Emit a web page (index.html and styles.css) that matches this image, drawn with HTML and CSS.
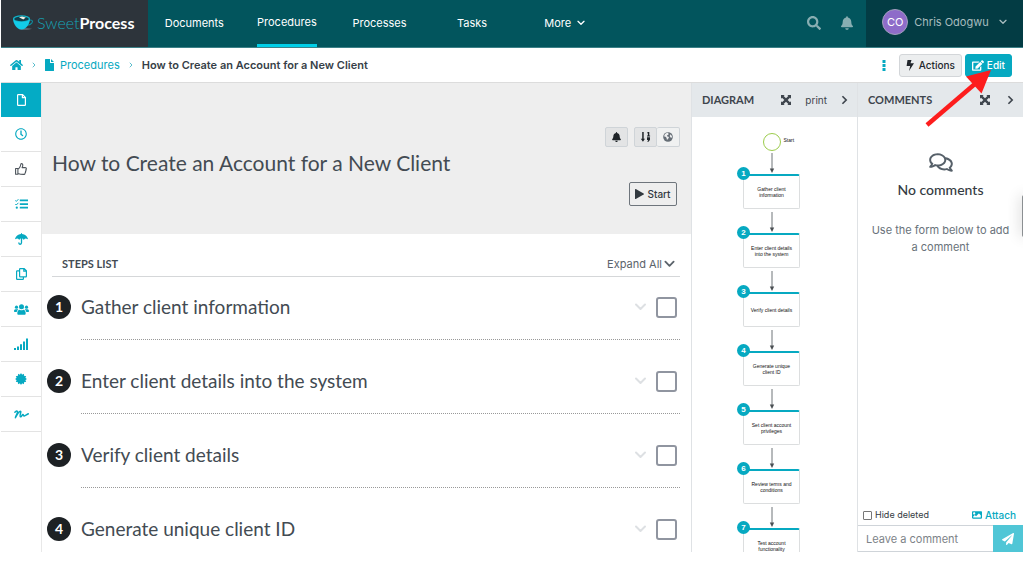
FILE: index.html
```html
<!DOCTYPE html>
<html lang="en">
<head>
<meta charset="utf-8">
<title>How to Create an Account for a New Client - SweetProcess</title>
<link rel="stylesheet" href="styles.css">
</head>
<body>
<svg class="defs" aria-hidden="true">
  <symbol id="i-down" viewBox="0 0 12 8"><path d="M1.500 1.500 6 6l4.500-4.500" fill="none" stroke="currentColor" stroke-width="2" stroke-linecap="round" stroke-linejoin="round"/></symbol>
  <symbol id="i-right" viewBox="0 0 8 12"><path d="M1.500 1.500 6 6l-4.500 4.500" fill="none" stroke="currentColor" stroke-width="2"/></symbol>
  <symbol id="i-bell" viewBox="0 0 448 512"><path d="M224 512c35.320 0 63.970-28.650 63.970-64H160.030c0 35.350 28.650 64 63.970 64zm215.390-149.710c-19.320-20.760-55.470-51.990-55.470-154.290 0-77.700-54.480-139.900-127.940-155.160V32c0-17.670-14.320-32-31.980-32s-31.980 14.330-31.980 32v20.840C118.560 68.100 64.080 130.300 64.080 208c0 102.300-36.150 133.530-55.470 154.290-6 6.450-8.660 14.160-8.610 21.710.110 16.400 12.980 32 32.100 32h383.800c19.120 0 32-15.600 32.100-32 .050-7.550-2.610-15.270-8.610-21.710z"/></symbol>
  <symbol id="i-expand" viewBox="0 0 12 12"><path d="M0 0h4.400L3.200 1.200 6 4l2.800-2.800L7.600 0H12v4.400l-1.200-1.200L8 6l2.800 2.800L12 7.600V12H7.600l1.200-1.200L6 8l-2.800 2.800L4.400 12H0V7.600l1.200 1.200L4 6 1.200 3.200 0 4.400z"/></symbol>
  <symbol id="i-arrow" viewBox="0 0 6 20"><path d="M3 0v16" stroke="#6f7478" stroke-width="1"/><path d="M.8 15.500h4.400L3 20z" fill="#4a4f53"/></symbol>
</svg>

<div class="app">
  <header class="topbar">
    <a class="logo" href="#" aria-label="SweetProcess">
      <svg width="21" height="16" viewBox="0 0 21 16">
        <path d="M15.500 5.500c3-1.500 5 .5 3.300 2.600-1 1.200-2.600 2-4.500 2.200" fill="none" stroke="#0d8ea0" stroke-width="1.100"/>
        <path d="M5 13.700c3-1 11-1 14 0-3 1.500-11 1.800-14 0z" fill="#59606a"/>
        <path d="M0 3.500C0 8 3.500 14.600 8.500 14.600S17 8 17 3.500z" fill="#12cbe8"/>
        <ellipse cx="8.500" cy="3.600" rx="8.500" ry="3.300" fill="#11b3c9"/>
        <ellipse cx="8.500" cy="3.900" rx="7.200" ry="2.400" fill="#123f4b"/>
        <path d="M6 2.300l3-.9 3.800 1-2.500 2z" fill="#f3efe2"/>
      </svg>
      <span class="logo-text">Sweet<b>Process</b></span>
    </a>
    <nav class="mainnav">
      <a href="#">Documents</a>
      <a href="#" class="active"><span>Procedures</span></a>
      <a href="#">Processes</a>
      <a href="#">Tasks</a>
      <a href="#">More <svg width="8" height="6"><use href="#i-down"/></svg></a>
    </nav>
    <div class="tools">
      <button aria-label="Search"><svg width="14" height="14" viewBox="0 0 512 512"><path d="M505 442.700L405.300 343c-4.500-4.500-10.600-7-17-7H372c27.600-35.300 44-79.700 44-128C416 93.100 322.900 0 208 0S0 93.100 0 208s93.100 208 208 208c48.300 0 92.700-16.400 128-44v16.300c0 6.400 2.500 12.500 7 17l99.700 99.700c9.400 9.400 24.600 9.400 33.900 0l28.300-28.300c9.400-9.400 9.400-24.600.1-34zM208 336c-70.700 0-128-57.200-128-128 0-70.700 57.200-128 128-128 70.700 0 128 57.200 128 128 0 70.700-57.200 128-128 128z"/></svg></button>
      <button aria-label="Notifications"><svg width="12" height="14"><use href="#i-bell"/></svg></button>
    </div>
    <button class="user"><span class="avatar">CO</span><span>Chris Odogwu</span><svg width="8" height="6"><use href="#i-down"/></svg></button>
  </header>

  <div class="crumbbar">
    <nav class="crumbs" aria-label="Breadcrumb">
      <a href="#" aria-label="Home"><svg width="13" height="12" viewBox="0 0 576 512"><path d="M280.370 148.260L96 300.110V464a16 16 0 0 0 16 16l112.060-.290a16 16 0 0 0 15.920-16V368a16 16 0 0 1 16-16h64a16 16 0 0 1 16 16v95.640a16 16 0 0 0 16 16.050L464 480a16 16 0 0 0 16-16V300L295.670 148.260a12.190 12.190 0 0 0-15.300 0zM571.600 251.470L488 182.560V44.050a12 12 0 0 0-12-12h-56a12 12 0 0 0-12 12v72.610L318.470 43a48 48 0 0 0-61 0L4.340 251.470a12 12 0 0 0-1.600 16.900l25.500 31A12 12 0 0 0 45.150 301l235.220-193.740a12.190 12.190 0 0 1 15.300 0L530.900 301a12 12 0 0 0 16.900-1.600l25.500-31a12 12 0 0 0-1.700-16.930z"/></svg></a>
      <svg class="sep" width="4" height="6"><use href="#i-right"/></svg>
      <a href="#"><svg width="9" height="12" viewBox="0 0 9 12"><path d="M.6 0H5v3.400c0 .3.300.6.600.6H9v7.400c0 .3-.3.600-.6.600H.6c-.3 0-.6-.3-.6-.6V.6C0 .3.300 0 .6 0zM6 0l3 3H6z"/></svg>Procedures</a>
      <svg class="sep" width="4" height="6"><use href="#i-right"/></svg>
      <strong>How to Create an Account for a New Client</strong>
    </nav>
    <div class="crumb-actions">
      <button class="dots" aria-label="More options"><svg width="4" height="11" viewBox="0 0 4 11"><path d="M.5 0h3v3h-3zM.5 4h3v3h-3zM.5 8h3v3h-3z"/></svg></button>
      <button class="btn"><svg width="8" height="11" viewBox="0 0 8 11"><path d="M1.500 0h4L4.500 3.300H8L3 11l1.200-5H.6z"/></svg>Actions</button>
      <button class="btn primary"><svg width="12" height="11" viewBox="0 0 576 512"><path d="M402.600 83.200l90.200 90.200c3.800 3.800 3.800 10 0 13.800L274.400 405.600l-92.800 10.300c-12.400 1.400-22.900-9.100-21.500-21.500l10.300-92.800L388.800 83.200c3.800-3.800 10-3.800 13.800 0zm162-22.900l-48.800-48.800c-15.200-15.200-39.900-15.200-55.200 0l-35.400 35.400c-3.800 3.800-3.800 10 0 13.800l90.200 90.200c3.800 3.800 10 3.800 13.800 0l35.400-35.400c15.200-15.300 15.200-40 0-55.200zM384 346.200V448H64V128h229.800c3.200 0 6.200-1.300 8.500-3.500l40-40c7.600-7.600 2.200-20.500-8.500-20.500H48C21.500 64 0 85.500 0 112v352c0 26.500 21.500 48 48 48h352c26.500 0 48-21.500 48-48V306.200c0-10.700-12.900-16-20.500-8.500l-40 40c-2.200 2.300-3.500 5.300-3.500 8.500z"/></svg>Edit</button>
    </div>
  </div>

  <div class="body">
    <nav class="rail" aria-label="Procedure sections">
      <a href="#" class="on" aria-label="Document"><svg width="9" height="12" viewBox="0 0 9 12"><path d="M1.300.6H5.600L8.400 3.400v7.300c0 .4-.3.700-.7.700H1.300c-.4 0-.7-.3-.7-.7V1.300c0-.4.300-.7.700-.7zM5.400.6v3h3" fill="none" stroke="currentColor" stroke-width="1.200"/></svg></a>
      <a href="#" aria-label="History"><svg width="12" height="12" viewBox="0 0 512 512"><path d="M256 8C119 8 8 119 8 256s111 248 248 248 248-111 248-248S393 8 256 8zm0 448c-110.500 0-200-89.500-200-200S145.500 56 256 56s200 89.500 200 200-89.500 200-200 200zm61.800-104.400l-84.900-61.700c-3.100-2.300-4.900-5.900-4.900-9.700V116c0-6.600 5.400-12 12-12h32c6.600 0 12 5.400 12 12v141.700l66.800 48.600c5.400 3.900 6.500 11.400 2.600 16.800L334.600 349c-3.900 5.300-11.400 6.500-16.800 2.600z"/></svg></a>
      <a href="#" class="muted" aria-label="Approvals"><svg width="12" height="12" viewBox="0 0 12 12"><path d="M.6 5.500h2.300v5.700H.6zM2.900 6.200c1.500-.8 2.200-2 2.500-3.300.2-1.100.3-2.300 1-2.300 1.200 0 1.500 1 1.300 2.200-.1.700-.5 1.300-.6 1.800h3c.8 0 1.300.6 1.200 1.300 0 .5-.3.800-.5 1 .3.500.2 1.200-.3 1.600.2.500 0 1.100-.4 1.400.1 1-.5 1.500-1.500 1.500-2.700 0-3.700-.2-5.700-.9" fill="none" stroke="currentColor" stroke-width="1.100" stroke-linejoin="round"/></svg></a>
      <a href="#" aria-label="Tasks"><svg width="13" height="10" viewBox="0 0 13 10"><path d="M4.800.6H13v1.700H4.800zM4.800 4.200H13v1.700H4.800zM4.800 7.800H13v1.700H4.800z"/><path d="M.3 1.400l1 1L3.400.2M.3 5l1 1 2.100-2.200" fill="none" stroke="currentColor" stroke-width="1"/><circle cx="1.800" cy="8.700" r="1.100"/></svg></a>
      <a href="#" aria-label="Policies"><svg width="13" height="12" viewBox="0 0 13 12"><path d="M6 1V.6c0-.8 1-.8 1 0V1c3 .2 5.300 2.200 5.900 4.800.1.400-.3.600-.6.300-1.100-.9-2.400-.7-3.200.5-.2.300-.4.300-.6 0C7.800 5.600 6.900 5.200 6.500 5.200s-1.300.4-2 1.400c-.2.300-.4.300-.6 0C3.100 5.400 1.800 5.200.7 6.100c-.3.300-.7.100-.6-.3C.7 3.200 3 1.200 6 1z"/><path d="M6.500 5v4.800c0 1.900-2.600 1.900-2.600.2" fill="none" stroke="currentColor" stroke-width="1.300" stroke-linecap="round"/></svg></a>
      <a href="#" aria-label="Copies"><svg width="11" height="12" viewBox="0 0 11 12"><path d="M4.200.6h4l2.200 2.200v5.400c0 .4-.2.600-.6.600H4.200c-.4 0-.6-.2-.6-.6V1.200c0-.4.200-.6.600-.6zM7.800.6v2.600h2.600M3.400 2.900H1.200c-.4 0-.6.200-.6.600v7.300c0 .4.200.6.600.6h5.600c.4 0 .6-.2.600-.6V9" fill="none" stroke="currentColor" stroke-width="1.200"/></svg></a>
      <a href="#" aria-label="Teams"><svg width="15" height="11" viewBox="0 0 15 11"><circle cx="7.500" cy="2.700" r="2.500"/><circle cx="2.500" cy="3.200" r="1.600"/><circle cx="12.500" cy="3.200" r="1.600"/><path d="M3.300 9.200c0-2 1-3.400 2.400-3.400 1.200.7 2.400.7 3.600 0 1.400 0 2.400 1.400 2.400 3.400 0 1-.5 1.500-1.200 1.500h-6c-.7 0-1.200-.5-1.200-1.500zM0 7.200C0 6 .6 5.200 1.600 5.200h1.600c.4 0 .8.100 1.100.4C3.400 6.200 2.900 7 2.700 8H.7C.2 8 0 7.700 0 7.200zM15 7.200c0-1.200-.6-2-1.600-2h-1.600c-.4 0-.8.1-1.100.4.9.6 1.400 1.400 1.600 2.400h2c.5 0 .7-.3.700-.8z"/></svg></a>
      <a href="#" aria-label="Reports"><svg width="14" height="12" viewBox="0 0 14 12"><path d="M0 10h2v2H0zM3 8.500h2V12H3zM6 6.200h2V12H6zM9 3.500h2V12H9zM12 .5h2V12h-2z"/></svg></a>
      <a href="#" aria-label="Certification"><svg width="12" height="12" viewBox="-6 -6 12 12"><circle r="4.600"/><path id="ray" d="M-1.200-4 0-6l1.200 2zM-1.200 4 0 6l1.200-2zM-4-1.200-6 0l2 1.200zM4-1.200 6 0 4 1.200z"/><use href="#ray" transform="rotate(30)"/><use href="#ray" transform="rotate(60)"/></svg></a>
      <a href="#" aria-label="Signatures"><svg width="15" height="9" viewBox="0 0 15 9"><path d="M.9 2.300C2.200.8 3.500.6 3.500 2S1.800 6 1.400 7.700C3 4.600 4.800 1.200 6.300 1.200c1.500 0-1.200 4.900.2 5.500C7.700 7.200 8 4.300 9 4.500c.7.200.3 1.600 1.200 1.500 1.200-.2 2.500-1.500 4.100-2.200" fill="none" stroke="currentColor" stroke-width="1.500" stroke-linecap="round" stroke-linejoin="round"/></svg></a>
    </nav>

    <main class="main">
      <section class="hero">
        <div class="hero-tools">
          <button class="mini dark" aria-label="Subscribe"><svg width="9" height="10"><use href="#i-bell"/></svg></button>
          <div class="group">
            <button class="mini dark" aria-label="Numbered order"><svg width="11" height="10" viewBox="0 0 11 10"><path d="M2.200 0h1.500v6.800H5L2.950 9.800.8 6.800h1.400zM7.700 0h1.600v3.500h.8v.9H7v-.9h.9V1.200H7zM7 5.200h3v2.500L8.500 9.800H7.200l1-1.700H7z"/></svg></button>
            <button class="mini" aria-label="Public"><svg width="10" height="10" viewBox="0 0 10 10"><circle cx="5" cy="5" r="4.800" fill="#666e76"/><path d="M4 .8 2 2 1 4.200l2 .8.600 1.200L4 8l1.400-1.400L6 5 4 4.300l.2-1 1.300-.6L5.300 1zM7.500 2.300 6.700 4l.8 1.500 1.300.3.200-1.600z" fill="#edeeef"/></svg></button>
          </div>
        </div>
        <h1>How to Create an Account for a New Client</h1>
        <button class="start"><svg width="9" height="10" viewBox="0 0 9 10"><path d="M0 .6C0 .1.400-.1.800.1l7.800 4.400c.5.300.5.700 0 1L.8 9.900C.4 10.100 0 9.900 0 9.400z"/></svg>Start</button>
      </section>

      <section class="steps">
        <div class="steps-head">
          <h2>STEPS LIST</h2>
          <button>Expand All<svg width="11" height="8"><use href="#i-down"/></svg></button>
        </div>
        <ol>
          <li><span class="num">1</span><div class="step"><h3>Gather client information</h3><svg class="chev" width="13" height="8"><use href="#i-down"/></svg><input type="checkbox" aria-label="Gather client information"></div></li>
          <li><span class="num">2</span><div class="step"><h3>Enter client details into the system</h3><svg class="chev" width="13" height="8"><use href="#i-down"/></svg><input type="checkbox" aria-label="Enter client details into the system"></div></li>
          <li><span class="num">3</span><div class="step"><h3>Verify client details</h3><svg class="chev" width="13" height="8"><use href="#i-down"/></svg><input type="checkbox" aria-label="Verify client details"></div></li>
          <li><span class="num">4</span><div class="step"><h3>Generate unique client ID</h3><svg class="chev" width="13" height="8"><use href="#i-down"/></svg><input type="checkbox" aria-label="Generate unique client ID"></div></li>
        </ol>
      </section>
    </main>

    <aside class="panel diagram">
      <div class="panel-head"><h2>DIAGRAM</h2>
        <button aria-label="Expand diagram"><svg width="10" height="10"><use href="#i-expand"/></svg></button>
        <button>print</button>
        <button aria-label="Collapse diagram"><svg width="7" height="10"><use href="#i-right"/></svg></button>
      </div>
      <div class="flow">
        <div class="flow-start"><span class="ring"></span><span class="flow-label">Start</span></div>
        <ol>
          <li><svg width="6" height="20"><use href="#i-arrow"/></svg><div class="node"><span class="dot">1</span>Gather client information</div></li>
          <li><svg width="6" height="20"><use href="#i-arrow"/></svg><div class="node"><span class="dot">2</span>Enter client details into the system</div></li>
          <li><svg width="6" height="20"><use href="#i-arrow"/></svg><div class="node"><span class="dot">3</span>Verify client details</div></li>
          <li><svg width="6" height="20"><use href="#i-arrow"/></svg><div class="node"><span class="dot">4</span>Generate unique client ID</div></li>
          <li><svg width="6" height="20"><use href="#i-arrow"/></svg><div class="node"><span class="dot">5</span>Set client account privileges</div></li>
          <li><svg width="6" height="20"><use href="#i-arrow"/></svg><div class="node"><span class="dot">6</span>Review terms and conditions</div></li>
          <li><svg width="6" height="20"><use href="#i-arrow"/></svg><div class="node"><span class="dot">7</span>Test account functionality</div></li>
        </ol>
      </div>
    </aside>

    <aside class="panel comments">
      <div class="panel-head"><h2>COMMENTS</h2>
        <button aria-label="Expand comments"><svg width="10" height="10"><use href="#i-expand"/></svg></button>
        <button aria-label="Collapse comments"><svg width="7" height="10"><use href="#i-right"/></svg></button>
      </div>
      <div class="empty">
        <svg width="24" height="21" viewBox="0 0 576 512"><path d="M532 386.200c27.500-27.100 44-61.100 44-98.200 0-80-76.500-146.100-176.200-157.900C368.300 72.500 294.300 32 208 32 93.100 32 0 103.600 0 192c0 37 16.500 71 44 98.200-15.300 30.700-37.300 54.500-37.700 54.900-6.300 6.700-8.100 16.500-4.400 25 3.600 8.500 12 14 21.200 14 53.500 0 96.700-20.200 125.200-38.800 9.200 2.100 18.700 3.700 28.400 4.900C208.100 407.600 281.800 448 368 448c20.800 0 40.800-2.400 59.800-6.800C456.300 459.700 499.400 480 553 480c9.200 0 17.500-5.500 21.200-14 3.600-8.500 1.900-18.300-4.400-25-.4-.3-22.500-24.100-37.800-54.800zm-392.800-92.300L122.100 305c-14.100 9.100-28.500 16.300-43.100 21.400 2.700-4.700 5.400-9.700 8-14.800l15.500-31.100L77.700 256C64.200 242.600 48 220.700 48 192c0-60.700 73.300-112 160-112s160 51.300 160 112-73.300 112-160 112c-16.500 0-33-1.900-49-5.600l-19.800-4.500zM498.300 352l-24.700 24.400 15.500 31.100c2.600 5.100 5.300 10.100 8 14.800-14.600-5.100-29-12.300-43.100-21.400l-17.100-11.100-19.900 4.600c-16 3.700-32.500 5.600-49 5.600-54 0-102.200-20.100-131.300-49.700C338 339.500 416 272.900 416 192c0-3.400-.4-6.700-.7-10C479.700 196.500 528 238.800 528 288c0 28.700-16.200 50.600-29.700 64z"/></svg>
        <h3>No comments</h3>
        <p>Use the form below to add a comment</p>
      </div>
      <div class="comment-tools">
        <label><input type="checkbox">Hide deleted</label>
        <a href="#"><svg width="10" height="10" viewBox="0 0 512 512"><path d="M464 448H48c-26.510 0-48-21.490-48-48V112c0-26.510 21.490-48 48-48h416c26.510 0 48 21.490 48 48v288c0 26.510-21.490 48-48 48zM112 120c-30.928 0-56 25.072-56 56s25.072 56 56 56 56-25.072 56-56-25.072-56-56-56zM64 384h384V272l-87.515-87.515c-4.686-4.686-12.284-4.686-16.971 0L208 320l-55.515-55.515c-4.686-4.686-12.284-4.686-16.971 0L64 336v48z"/></svg>Attach</a>
      </div>
      <form class="composer">
        <input type="text" placeholder="Leave a comment" aria-label="Leave a comment">
        <button type="button" aria-label="Send"><svg width="12" height="12" viewBox="0 0 512 512"><path d="M476 3.200L12.500 270.600c-18.100 10.400-15.800 35.600 2.200 43.200L121 358.400l287.300-253.200c5.500-4.900 13.300 2.600 8.600 8.300L176 407v80.500c0 23.600 28.500 32.900 42.500 15.800L282 426l124.600 52.200c14.200 6 30.400-2.900 33-18.200l72-432C515 7.800 493.300-6.800 476 3.200z"/></svg></button>
      </form>
      <span class="edge-tab"></span>
    </aside>
  </div>
  <svg class="pointer" width="68" height="60" viewBox="0 0 68 60" aria-hidden="true"><path d="M3 56 52 14" stroke="#fd1d1d" stroke-width="4.500"/><path d="M67 1 42 7.500 57.500 24.500z" fill="#fd1d1d"/></svg>
</div>
</body>
</html>
```

FILE: styles.css
```css
* { box-sizing: border-box; }
body { margin: 0; background: #fff; color: #434b53; font: 11px/16px Inter, "Liberation Sans", sans-serif; }
h1, h2, h3, p, ol { margin: 0; padding: 0; font-weight: 400; }
ol { list-style: none; }
a { color: #06a9c1; text-decoration: none; }
button { margin: 0; padding: 0; border: 0; background: none; color: inherit; font: inherit; display: flex; align-items: center; justify-content: center; }
svg { fill: currentColor; flex: none; }
.defs { position: absolute; width: 0; height: 0; }

.app { position: relative; display: flex; flex-direction: column; height: 100vh; padding: 0 1px 13px; overflow: hidden; }

/* Top bar */
.topbar { display: flex; height: 48px; flex: none; background: #02555d; border-bottom: 1px solid #3c8188; }
.logo { display: flex; align-items: center; gap: 3px; width: 147px; padding: 0 0 2px 12px; background: #2d343b; }
.logo-text { font: 300 16px/20px Lato, sans-serif; color: #16a3b5; }
.logo-text b { font-weight: 700; color: #fff; }
.mainnav { display: grid; grid-template-columns: repeat(5, 1fr); width: 463px; }
.mainnav a { display: flex; align-items: center; justify-content: center; gap: 6px; color: #fff; padding-bottom: 1px; }
.mainnav .active { align-items: stretch; padding: 0; }
.mainnav .active span { padding-top: 14px; border-bottom: 3px solid #00cfe8; }
.tools { display: flex; align-items: center; gap: 20px; margin-left: auto; padding: 0 13px 2px 0; color: #88aeb2; }
.user { width: 157px; gap: 6px; padding-bottom: 3px; background: #033c44; color: #a8bcbf; }
.user svg { margin-left: 4px; }
.avatar { width: 26px; height: 26px; border: 1px solid #a3a0bd; border-radius: 50%; background: #8e6cc9; color: #fff; font-size: 11px; line-height: 24px; text-align: center; }

/* Breadcrumb bar */
.crumbbar { display: flex; align-items: center; justify-content: space-between; height: 35px; flex: none; padding: 0 11px 0 9px; border-bottom: 1px solid #dcdcdc; }
.crumbs, .crumbs a, .crumb-actions { display: flex; align-items: center; }
.crumbs { gap: 9px; }
.crumbs a { gap: 6px; }
.crumbs strong { font-weight: 600; color: #373f48; }
.sep { color: #5bbecd; }
.crumb-actions { gap: 3px; }
.dots { padding-right: 10px; color: #06a9c1; }
.btn { gap: 5px; height: 23px; padding: 0 6px; border: 1px solid #d3d6d9; border-radius: 3px; background: #eceeef; color: #22272c; font-size: 10px; font-weight: 500; }
.btn.primary { gap: 3px; border-color: #06a9c1; background: #06a9c1; color: #fff; }

/* Page body */
.body { display: flex; flex: 1; min-height: 0; }
.rail { width: 41px; flex: none; border-right: 1px solid #e8e8e8; }
.rail a { display: flex; align-items: center; justify-content: center; height: 35px; border-bottom: 1px solid #e3e3e3; }
.rail .on { height: 34px; background: #04abc5; color: #fff; border-bottom: 0; }
.rail .muted { color: #4d545b; }
.main { flex: 1; min-width: 0; overflow: hidden; }
.hero { display: flex; flex-direction: column; height: 151px; padding: 44px 11px 0 10px; background: #eee; }
.hero-tools { display: flex; justify-content: flex-end; gap: 6px; }
.mini { width: 23px; height: 20px; border: 1px solid #cfd4d8; border-radius: 2px; background: #f0f1f1; }
.mini.dark { background: #e3e4e5; color: #1f2428; }
.group { display: flex; }
.group .mini + .mini { border-left: 0; }
.hero h1 { padding: 2px 0 5px; font: 400 21px/28px Lato, sans-serif; }
.start { align-self: flex-end; gap: 3px; width: 48px; height: 24px; margin-right: 3px; border: 1px solid #6e757c; border-radius: 2px; color: #32393f; font-size: 10px; font-weight: 500; }
.steps { padding: 18px 11px 0 10px; }
.steps-head { display: flex; align-items: center; justify-content: space-between; height: 25px; padding: 0 5px 0 10px; border-bottom: 1px solid #d5d7d9; }
.steps-head h2 { font: 700 11px/16px Lato, sans-serif; }
.steps-head button { gap: 2px; color: #5b636b; }
.steps li { display: flex; align-items: flex-start; gap: 10px; margin: 0 0 11px -5px; padding-top: 18px; }
.num { flex: none; width: 24px; height: 24px; border-radius: 50%; background: #1d2124; color: #fff; font: 700 14px/24px Lato, sans-serif; text-align: center; }
.step { display: flex; align-items: center; flex: 1; gap: 9px; padding: 0 3px 20px 0; border-bottom: 1px dotted #999; }
.step h3 { flex: 1; font: 400 19px/24px Lato, sans-serif; }
.chev { color: #dde0e3; }
.step input { appearance: none; width: 21px; height: 21px; margin: 0; border: 2px solid #9095a0; border-radius: 3px; background: #fff; }

/* Side panels */
.panel { display: flex; flex-direction: column; flex: none; position: relative; width: 166px; border-left: 1px solid #dfe2e5; overflow: hidden; }
.panel-head { display: flex; align-items: center; gap: 14px; height: 34px; flex: none; padding: 0 9px 0 10px; background: #e4e8eb; color: #3e454d; }
.panel-head h2 { margin-right: auto; font: 700 11px/16px Lato, sans-serif; }
.panel-head button { font-size: 10px; }
.comments .panel-head { gap: 17px; }
.flow { display: flex; flex-direction: column; align-items: center; padding: 16px 6px 0 0; flex: 1; min-height: 0; overflow: hidden; font: 5px/6px "Liberation Sans", sans-serif; color: #111; }
.flow-start { position: relative; }
.ring { display: block; width: 18px; height: 18px; border: 1px solid #9ccc4c; border-radius: 50%; }
.flow-label { position: absolute; left: 21px; top: 4px; }
.flow li { display: flex; flex-direction: column; align-items: center; gap: 1px; padding: 2px 0 1px; }
.node { display: flex; align-items: center; justify-content: center; position: relative; width: 57px; height: 35px; padding: 0 4px; border: 1px solid #dcdedf; border-top: 2px solid #06a9c1; border-radius: 2px; text-align: center; }
.dot { position: absolute; left: -7px; top: -9px; width: 13px; height: 13px; border-radius: 50%; background: #06a9c1; color: #fff; font: 700 8px/13px "Liberation Sans", sans-serif; }
.empty { flex: 1; display: flex; flex-direction: column; align-items: center; padding: 35px 12px 0; text-align: center; }
.empty svg { color: #566069; }
.empty h3 { margin: 8px 0 23px; font: 500 14px/18px Lato, sans-serif; color: #343b42; }
.empty p { line-height: 17px; color: #69727a; }
.comment-tools { display: flex; align-items: center; justify-content: space-between; height: 20px; padding: 0 7px 0 5px; font-size: 9px; color: #343b42; }
.comment-tools label, .comment-tools a { display: flex; align-items: center; gap: 3px; }
.comment-tools a { font-size: 10px; font-weight: 500; }
.comment-tools input { appearance: none; width: 9px; height: 9px; margin: 0; border: 1px solid #777; border-radius: 1px; }
.composer { display: flex; height: 27px; flex: none; border: 1px solid #cfd4d9; border-width: 1px 0; }
.composer input { flex: 1; min-width: 0; padding: 0 8px; border: 0; outline: 0; font: 11px/16px Inter, sans-serif; }
.composer input::placeholder { color: #7d8388; }
.composer button { width: 30px; margin: -1px 0; background: #50c6d6; color: #fff; }
.edge-tab { position: absolute; right: -3px; top: 112px; width: 4px; height: 42px; border-radius: 3px; background: #8b8f92; box-shadow: 0 0 14px rgba(0, 0, 0, .3); }

/* Callout arrow over the Edit button */
.pointer { position: absolute; right: 32px; top: 69px; }
```
